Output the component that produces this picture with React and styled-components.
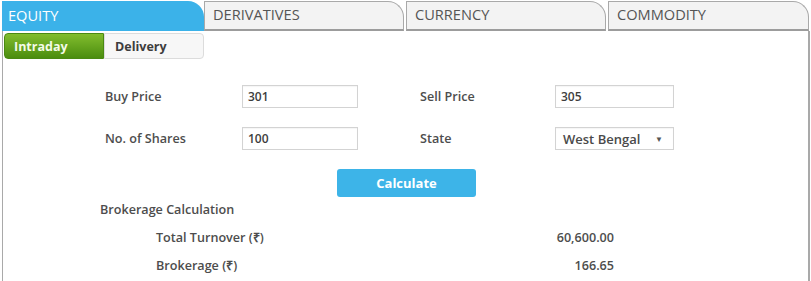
import React from "react";
import styled, { createGlobalStyle } from "styled-components";

const Global = createGlobalStyle`
  html, body { margin: 0; padding: 0; background: #fff; }
  body { font-family: "Open Sans", "Liberation Sans", sans-serif; color: #4d4d4d; }
  * { box-sizing: border-box; }
`;

const Page = styled.div`
  width: 811px;
  height: 281px;
  overflow: hidden;
`;

const TabBar = styled.div`
  display: flex;
  height: 31px;
  padding-left: 2px;
  padding-top: 1px;
`;

const Tab = styled.div`
  width: ${(p) => p.$w}px;
  height: 30px;
  margin-right: ${(p) => (p.$active ? 0 : 2)}px;
  padding-left: ${(p) => (p.$active ? 6 : 8)}px;
  padding-bottom: 3px;
  display: flex;
  align-items: center;
  font-size: 14.6px;
  font-weight: 400;
  text-transform: uppercase;
  border-top-right-radius: 16px;
  background: ${(p) => (p.$active ? "#3bb2e9" : "#f3f3f3")};
  color: ${(p) => (p.$active ? "#fff" : "#555")};
  border: ${(p) => (p.$active ? "none" : "1px solid #a9a9a9")};
  border-bottom: ${(p) => (p.$active ? "none" : "2px solid #9c9c9c")};
  &:last-child { margin-right: 0; }
`;

const Panel = styled.div`
  margin-left: 2px;
  width: 808px;
  height: 260px;
  border-left: 1px solid #a9a9a9;
  border-right: 2px solid #a9a9a9;
  padding-top: 2px;
`;

const SubTabs = styled.div`
  display: flex;
  margin-left: 1px;
  height: 26px;
`;

const SubTab = styled.div`
  width: 100px;
  display: flex;
  align-items: center;
  padding-left: ${(p) => (p.$active ? 9 : 10)}px;
  font-size: 12.5px;
  font-weight: 700;
  color: ${(p) => (p.$active ? "#f4fbe8" : "#3d3d3d")};
  background: ${(p) =>
    p.$active ? "linear-gradient(#82bd2e, #4b8d0f)" : "#f7f7f7"};
  border: ${(p) => (p.$active ? "1px solid #4a8a12" : "1px solid #dcdcdc")};
  border-radius: ${(p) => (p.$active ? "4px 0 0 4px" : "0 4px 4px 0")};
`;

const Form = styled.div`
  display: grid;
  grid-template-columns: 137px 116px 62px 135px 119px;
  row-gap: 19px;
  align-items: center;
  margin-top: 26px;
  margin-left: 102px;
`;

const Label = styled.div`
  font-size: 12.6px;
  font-weight: 600;
  color: #4d4d4d;
`;

const Spacer = styled.div``;

const Input = styled.div`
  height: 23px;
  border: 1px solid #d3d3d3;
  box-shadow: inset 0 1px 1px rgba(0, 0, 0, 0.04);
  display: flex;
  align-items: center;
  padding-left: 5px;
  font-size: 12px;
  font-weight: 600;
  color: #3d3d3d;
`;

const Select = styled(Input)`
  padding-left: 7px;
  padding-right: 10px;
  justify-content: space-between;
  font-size: 13px;
  color: #4a4a4a;
`;

const Arrow = styled.span`
  font-size: 8px;
  color: #555;
`;

const ButtonRow = styled.div`
  display: flex;
  justify-content: center;
  margin-top: 19px;
  padding-left: 2px;
`;

const Button = styled.div`
  width: 139px;
  height: 28px;
  background: #3db4e8;
  border-radius: 3px;
  color: #fff;
  font-size: 13px;
  font-weight: 700;
  display: flex;
  align-items: center;
  justify-content: center;
`;

const Heading = styled.div`
  margin-top: 3px;
  margin-left: 97px;
  font-size: 12.6px;
  font-weight: 600;
  height: 20px;
  line-height: 20px;
`;

const Results = styled.div`
  padding-top: 3px;
`;

const ResultRow = styled.div`
  display: flex;
  justify-content: space-between;
  margin-left: 153px;
  width: 458px;
  height: 28px;
  align-items: center;
  font-size: 12.6px;
  font-weight: 600;
  color: #4d4d4d;
`;

export default function App() {
  return (
    <Page>
      <Global />
      <TabBar>
        <Tab $active $w={202}>Equity</Tab>
        <Tab $w={200}>Derivatives</Tab>
        <Tab $w={200}>Currency</Tab>
        <Tab $w={201}>Commodity</Tab>
      </TabBar>
      <Panel>
        <SubTabs>
          <SubTab $active>Intraday</SubTab>
          <SubTab>Delivery</SubTab>
        </SubTabs>
        <Form>
          <Label>Buy Price</Label>
          <Input>301</Input>
          <Spacer />
          <Label>Sell Price</Label>
          <Input>305</Input>
          <Label>No. of Shares</Label>
          <Input>100</Input>
          <Spacer />
          <Label>State</Label>
          <Select>
            West Bengal<Arrow>▼</Arrow>
          </Select>
        </Form>
        <ButtonRow>
          <Button>Calculate</Button>
        </ButtonRow>
        <Heading>Brokerage Calculation</Heading>
        <Results>
          <ResultRow>
            <span>Total Turnover (₹)</span>
            <span>60,600.00</span>
          </ResultRow>
          <ResultRow>
            <span>Brokerage (₹)</span>
            <span>166.65</span>
          </ResultRow>
        </Results>
      </Panel>
    </Page>
  );
}
